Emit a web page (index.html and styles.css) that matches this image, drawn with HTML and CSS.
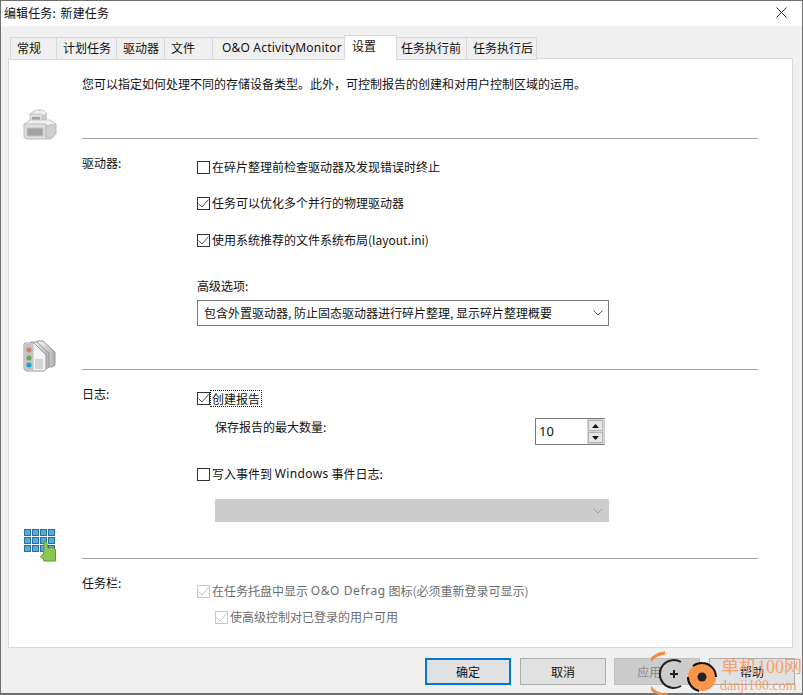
FILE: index.html
```html
<!DOCTYPE html>
<html lang="zh-CN">
<head>
<meta charset="utf-8">
<title>编辑任务: 新建任务</title>
<link rel="stylesheet" href="styles.css">
</head>
<body>
<div class="window">
  <header class="titlebar">
    <span class="title">编辑任务: 新建任务</span>
    <svg class="close" width="11" height="11" viewBox="0 0 11 11"><path d="M.5.5l10 10M10.500.5l-10 10" stroke="#222" fill="none"/></svg>
  </header>
  <div class="client">
    <nav class="tabs">
      <div class="tab w47">常规</div>
      <div class="tab w60">计划任务</div>
      <div class="tab w48">驱动器</div>
      <div class="tab w48">文件</div>
      <div class="tab w132">O&amp;O ActivityMonitor</div>
      <div class="tab w52 active">设置</div>
      <div class="tab w70 tight">任务执行前</div>
      <div class="tab w70">任务执行后</div>
    </nav>
    <main class="panel">
      <p class="intro">您可以指定如何处理不同的存储设备类型。此外，可控制报告的创建和对用户控制区域的运用。</p>

      <div class="rulehead first">
        <svg class="icon" width="34" height="32" viewBox="0 0 34 32">
          <path d="M7 5l6-4h7l4 4-5 2H7z" fill="#f0f0f0" stroke="#c4c4c4"/>
          <path d="M7 5h12v9H7z" fill="#dcdcdc" stroke="#c8c8c8"/>
          <path d="M19 7l5-2v8l-5 2z" fill="#c8c8c8"/>
          <path d="M9 8h8v5H9z" fill="#a4a4a4"/>
          <path d="M1 15l6-4h20l6 4-10 2H1z" fill="#efefef" stroke="#c8c8c8"/>
          <path d="M1 15h22v15H3l-2-2z" fill="#dedede" stroke="#bdbdbd"/>
          <path d="M23 17l10-2v10l-5 5h-5z" fill="#cfcfcf" stroke="#bdbdbd"/>
          <path d="M4 19h16v8H4z" fill="#a2a2a2" stroke="#c4c4c4"/>
        </svg>
      </div>

      <section class="group drives">
        <h2 class="label">驱动器:</h2>
        <div class="opts">
          <div class="check"><span class="box"></span>在碎片整理前检查驱动器及发现错误时终止</div>
          <div class="check"><span class="box on"><svg width="11" height="9" viewBox="0 0 11 9"><path d="M.5 4.500l3.500 3.500 6.500-7.500" stroke="#555" fill="none"/></svg></span>任务可以优化多个并行的物理驱动器</div>
          <div class="check"><span class="box on"><svg width="11" height="9" viewBox="0 0 11 9"><path d="M.5 4.500l3.500 3.500 6.500-7.500" stroke="#555" fill="none"/></svg></span>使用系统推荐的文件系统布局(layout.ini)</div>
          <div class="adv-label">高级选项:</div>
          <div class="select">
            <span>包含外置驱动器, 防止固态驱动器进行碎片整理, 显示碎片整理概要</span>
            <svg width="10" height="6" viewBox="0 0 10 6"><path d="M.5.500l4.500 4.500 4.500-4.500" stroke="#555" fill="none"/></svg>
          </div>
        </div>
      </section>

      <div class="rulehead second">
        <svg class="icon" width="34" height="32" viewBox="0 0 34 32">
          <defs><linearGradient id="g2" x1="0" y1="0" x2="1" y2="0"><stop offset="0" stop-color="#fafafa"/><stop offset="1" stop-color="#b0b0b0"/></linearGradient></defs>
          <path d="M14 1h6l12 11v13l-3 2H14z" fill="url(#g2)" stroke="#999"/>
          <path d="M8 2h6l12 11v14l-3 2H8z" fill="url(#g2)" stroke="#999"/>
          <path d="M2 3h9l12 12v14l-2 2H3l-2-2V4z" fill="#f4f4f4" stroke="#999"/>
          <path d="M1.500 4h9v26.500H3l-1.500-1.500z" fill="#c4c4c4"/>
          <circle cx="6" cy="10" r="2.500" fill="#d9796f"/>
          <circle cx="6" cy="18" r="2.500" fill="#64a74f"/>
          <circle cx="6" cy="25" r="2.500" fill="#12a5d8"/>
          <path d="M12 20h8M12 22h8M12 24h8M12 26h8M12 28h8" stroke="#b4b4b4"/>
        </svg>
      </div>

      <section class="group logs">
        <h2 class="label">日志:</h2>
        <div class="opts">
          <div class="check focus"><span class="box on"><svg width="11" height="9" viewBox="0 0 11 9"><path d="M.5 4.500l3.500 3.500 6.500-7.500" stroke="#555" fill="none"/></svg></span><span class="dotted">创建报告</span></div>
          <div class="spinrow">
            <span class="spin-label">保存报告的最大数量:</span>
            <div class="spin">
              <span class="spin-val">10</span>
              <span class="spin-btns">
                <span class="spin-btn"><svg width="7" height="4" viewBox="0 0 7 4"><path d="M3.500 0L7 4H0z" fill="#111"/></svg></span>
                <span class="spin-btn"><svg width="7" height="4" viewBox="0 0 7 4"><path d="M3.500 4L7 0H0z" fill="#111"/></svg></span>
              </span>
            </div>
          </div>
          <div class="check event"><span class="box"></span>写入事件到&nbsp;<span class="win">Windows</span>&nbsp;事件日志:</div>
          <div class="select off">
            <svg width="10" height="6" viewBox="0 0 10 6"><path d="M.5.500l4.500 4.500 4.500-4.500" stroke="#a0a0a0" fill="none"/></svg>
          </div>
        </div>
      </section>

      <div class="rulehead third">
        <svg class="icon hand" width="34" height="33" viewBox="0 0 34 33">
          <g fill="#5aa9d6" stroke="#24709e"><rect x="1.500" y=".5" width="6" height="6"/><rect x="9.500" y=".5" width="6" height="6"/><rect x="17.500" y=".5" width="6" height="6"/><rect x="25.500" y=".5" width="6" height="6"/><rect x="1.500" y="8.500" width="6" height="6"/><rect x="9.500" y="8.500" width="6" height="6"/><rect x="17.500" y="8.500" width="6" height="6"/><rect x="25.500" y="8.500" width="6" height="6"/><rect x="1.500" y="16.500" width="6" height="6"/><rect x="9.500" y="16.500" width="6" height="6"/><rect x="17.500" y="16.500" width="6" height="6"/><rect x="25.500" y="16.500" width="6" height="6"/></g>
          <path d="M21 12.500h2.500l1.500 7 4-1.500 3.500 2.500v11.500H21l-1-2.500-2.500-1.500 3-3.500z" fill="#8cc653" stroke="#5b9a2c"/>
        </svg>
      </div>

      <section class="group tray">
        <h2 class="label">任务栏:</h2>
        <div class="opts">
          <div class="check dim"><span class="box on"><svg width="11" height="9" viewBox="0 0 11 9"><path d="M.5 4.500l3.500 3.500 6.500-7.500" stroke="#c4c4c4" fill="none"/></svg></span>在任务托盘中显示&nbsp;<span class="defrag">O&amp;O Defrag</span>&nbsp;图标(必须重新登录可显示)</div>
          <div class="check dim sub"><span class="box on"><svg width="11" height="9" viewBox="0 0 11 9"><path d="M.5 4.500l3.500 3.500 6.500-7.500" stroke="#c4c4c4" fill="none"/></svg></span>使高级控制对已登录的用户可用</div>
        </div>
      </section>
    </main>
    <footer class="buttons">
      <button class="btn primary">确定</button>
      <button class="btn">取消</button>
      <button class="btn off">应用(A)</button>
      <button class="btn">帮助</button>
    </footer>
  </div>
  <div class="watermark">
    <svg width="66" height="46" viewBox="0 0 66 46">
      <path d="M14 2a21 21 0 0 0 3 42" stroke="#f08a3c" stroke-width="3" fill="none"/>
      <circle cx="23" cy="23" r="14" fill="#ccc"/>
      <path d="M30 11a14 14 0 1 0 0 24" stroke="#222" stroke-width="2" fill="none"/>
      <path d="M19 23h8M23 19v8" stroke="#222" stroke-width="2"/>
      <circle cx="51" cy="26" r="14" fill="#f9954d"/>
      <path d="M42 15a14 14 0 0 1 9-3a14 14 0 0 1 14 14M48 40a14 14 0 0 1-11-14" stroke="#111" stroke-width="2" fill="none"/>
      <circle cx="51" cy="26" r="4.500" fill="#222"/>
    </svg>
    <div class="wm-text">
      <span class="wm-cn">单机100网</span>
      <span class="wm-en">danji100.com</span>
    </div>
  </div>
</div>
</body>
</html>
```
FILE: styles.css
```css
* { box-sizing: border-box; }
html, body { margin: 0; padding: 0; }
body {
  width: 803px;
  height: 695px;
  overflow: hidden;
  font: 12px/16px "Noto Sans CJK SC", "Noto Sans", sans-serif;
  color: #111;
}
.window {
  position: relative;
  width: 803px;
  height: 695px;
  border: 1px solid #707070;
  border-bottom-width: 2px;
  background: #f0f0f0;
  display: flex;
  flex-direction: column;
}
.titlebar {
  height: 25px;
  background: #fff;
  display: flex;
  align-items: center;
  justify-content: space-between;
  padding: 0 15px 2px 3px;
  flex: none;
}
.title { word-spacing: 2px; letter-spacing: .1px; }
.client { flex: 1; display: flex; flex-direction: column; padding: 9px 7px 0 7px; min-height: 0; }
.tabs { display: flex; height: 24px; padding: 2px 0 0 2px; flex: none; position: relative; z-index: 1; }
.tab {
  height: 23px;
  border: 1px solid #d9d9d9;
  border-left-width: 0;
  padding: 2px 0 0 6px;
  background: #f0f0f0;
  white-space: nowrap;
}
.tab:first-child { border-left-width: 1px; }
.w47 { width: 47px; }
.w60 { width: 60px; }
.w48 { width: 48px; }
.w132 { width: 132px; padding-left: 9px; font-family: "Noto Sans", sans-serif; letter-spacing: .18px; }
.w52 { width: 52px; padding-left: 7px; }
.w70 { width: 70px; }
.tight { padding-left: 4px; }
.active {
  height: 25px;
  margin-top: -2px;
  background: #fff;
  border-bottom: 0;
  border-left: 1px solid #d9d9d9;
  margin-left: -1px;
  width: 53px;
}
.panel {
  height: 590px;
  margin: -1px 2px 0 0;
  background: #fff;
  border: 1px solid #d9d9d9;
  padding: 17px 34px 0 73px;
  flex: none;
}
.intro { margin: 0; height: 16px; }
.rulehead { position: relative; border-bottom: 1px solid #a0a0a0; }
.rulehead.first { margin-top: 46px; }
.rulehead.second { margin-top: 43px; }
.rulehead.third { margin-top: 36px; }
.icon { position: absolute; left: -59px; bottom: -3px; }
.icon.hand { bottom: -4px; }
.group { display: flex; }
.label { width: 115px; margin: 16px 0 0; font: inherit; flex: none; }
.opts { flex: 1; min-width: 0; }
.check { display: flex; align-items: center; height: 16px; white-space: nowrap; }
.box {
  width: 13px;
  height: 13px;
  border: 1px solid #333;
  background: #fff;
  margin-right: 2px;
  flex: none;
  display: flex;
  align-items: center;
  justify-content: center;
}
.drives .check { margin-bottom: 20px; }
.drives .check:first-child { margin-top: 20px; }
.drives .check:nth-child(3) { margin-top: 21px; }
.adv-label { margin-top: 30px; height: 16px; }
.select {
  width: 412px;
  height: 26px;
  margin-top: 6px;
  background: #fff;
  border: 1px solid #7a7a7a;
  display: flex;
  align-items: center;
  justify-content: space-between;
  padding: 0 5px 0 6px;
}
.select.off {
  background: #ccc;
  border-color: #ccc;
  margin: 17px 0 0 18px;
  width: 394px;
  height: 23px;
  justify-content: flex-end;
}
.logs .check:first-child { margin-top: 20px; }
.dotted { outline: 1px dotted #222; padding: 0 1px; height: 15px; line-height: 15px; margin-left: -1px; }
.spinrow {
  display: flex;
  justify-content: space-between;
  align-items: flex-start;
  width: 390px;
  margin: 12px 0 0 18px;
  height: 27px;
}
.spin-label { margin-top: 1px; }
.spin {
  width: 70px;
  height: 27px;
  border: 1px solid #7a7a7a;
  border-right-color: #ccc;
  background: #fff;
  display: flex;
  justify-content: space-between;
  padding-left: 3px;
  font-family: "Noto Sans", sans-serif;
  font-size: 13px;
  line-height: 24px;
}
.spin-btns { width: 17px; display: flex; flex-direction: column; background: #d8d8d8; padding: 1px; gap: 1px; }
.spin-btn {
  flex: 1;
  background: #e6e6e6;
  border: 1px solid #b4b4b4;
  display: flex;
  align-items: center;
  justify-content: center;
}
.check.event { margin-top: 21px; }
.win { font-family: "Noto Sans", sans-serif; letter-spacing: .4px; }
.defrag { font-family: "Noto Sans", sans-serif; letter-spacing: .6px; }
.tray .check:first-child { margin-top: 24px; }
.dim { color: #6d6d6d; }
.dim .box { border-color: #c8c8c8; }
.sub { margin: 10px 0 0 18px; }
.buttons { display: flex; gap: 9px; justify-content: flex-end; padding: 10px 0 0; }
.buttons .btn:nth-child(2) { margin-right: -1px; }
.btn {
  width: 86px;
  height: 27px;
  font: inherit;
  color: #111;
  background: #e1e1e1;
  border: 1px solid #adadad;
  padding: 0;
}
.btn.primary { border: 2px solid #0078d7; }
.btn.off { color: #8a8a8a; background: #ccc; border-color: #bfbfbf; }
.watermark {
  position: absolute;
  left: 650px;
  top: 650px;
  display: flex;
  pointer-events: none;
}
.wm-text { display: flex; flex-direction: column; margin-left: 4px; color: #f7a26a; }
.wm-cn { font: 18px/22px "Liberation Serif", "Noto Sans CJK SC", serif; padding-top: 5px; white-space: nowrap; }
.wm-en { font: 14px/15px "Liberation Serif", serif; white-space: nowrap; margin-left: -1px; }
```
